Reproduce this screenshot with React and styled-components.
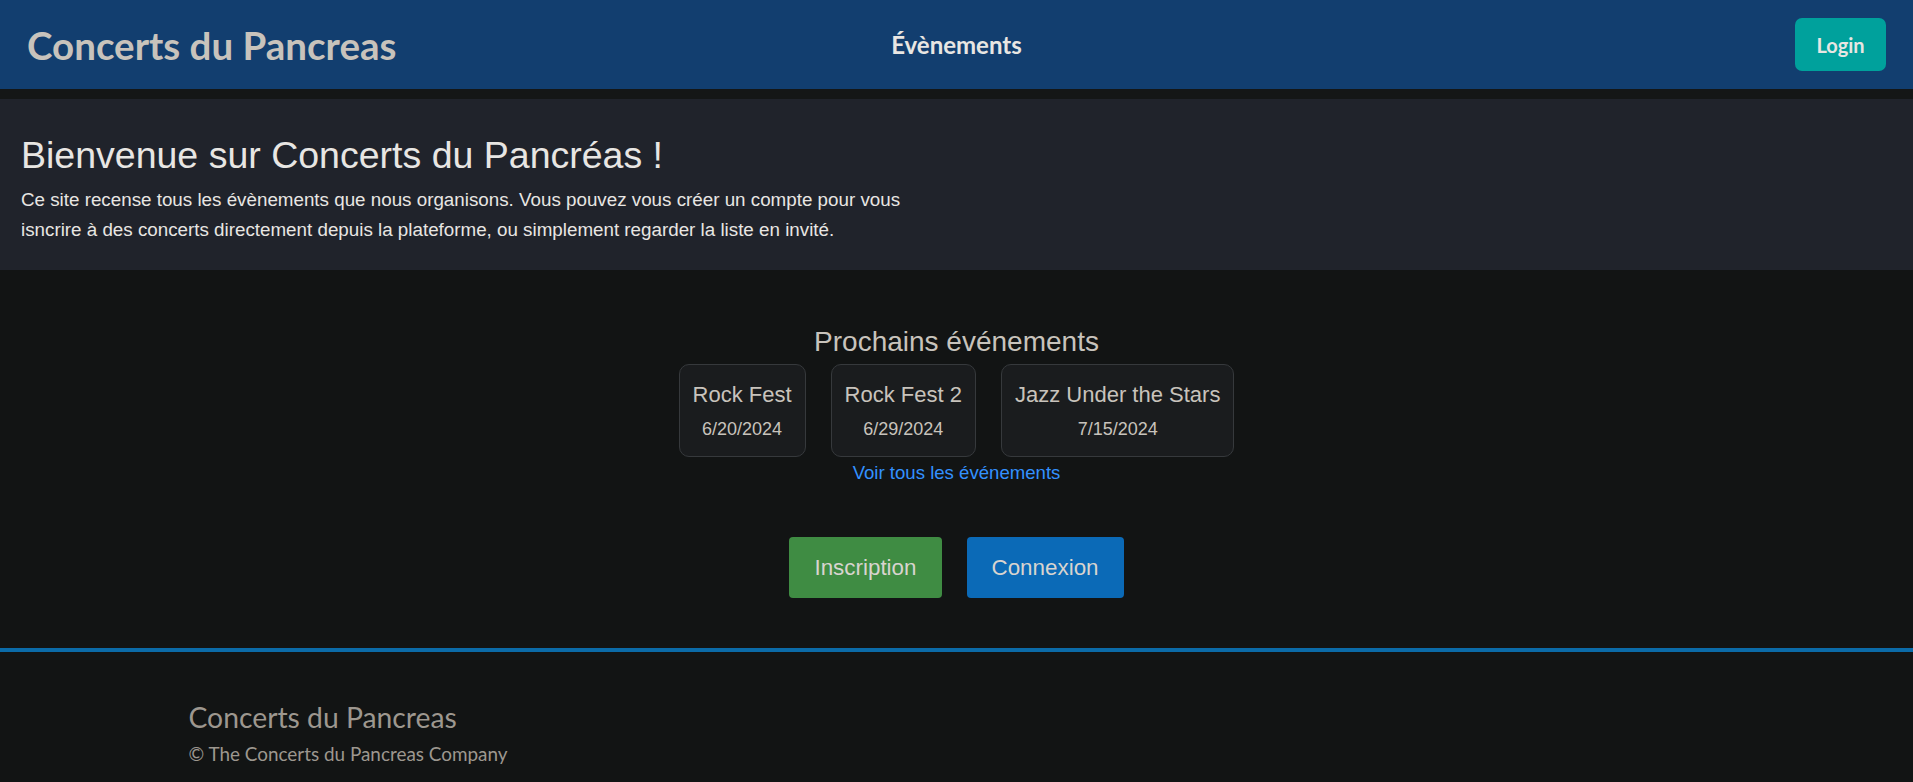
import React from 'react'
import styled, { createGlobalStyle } from 'styled-components'

const events = [
  { id: 1, name: 'Rock Fest', date: '6/20/2024' },
  { id: 2, name: 'Rock Fest 2', date: '6/29/2024' },
  { id: 3, name: 'Jazz Under the Stars', date: '7/15/2024' },
]

const GlobalStyle = createGlobalStyle`
  html {
    overflow-y: scroll;
    background: #121414;
  }
  html::-webkit-scrollbar {
    width: 3px;
  }
  html::-webkit-scrollbar-track {
    background: #3b3e41;
  }
  html::-webkit-scrollbar-thumb {
    background: #3b3e41;
  }
  body {
    margin: 0;
    background: #121414;
    color: #c8c3bc;
    font-family: 'Liberation Sans', Arial, sans-serif;
  }
`

const Page = styled.div`
  display: flex;
  flex-direction: column;
  min-height: 100vh;
`

const Navbar = styled.header`
  display: grid;
  grid-template-columns: 1fr auto 1fr;
  align-items: center;
  height: 89px;
  padding: 0 27px 0 27px;
  background: #123e6f;
  border-bottom: 10px solid #141616;
  font-family: Lato, 'Noto Sans', sans-serif;
`

const Brand = styled.div`
  font-size: 38.5px;
  font-weight: 700;
  color: #c8c3bc;
`

const NavLink = styled.a`
  font-size: 24px;
  font-weight: 700;
  color: #e8e6e3;
  text-decoration: none;
`

const LoginButton = styled.button`
  justify-self: end;
  width: 91px;
  height: 53px;
  border: none;
  border-radius: 7px;
  background: #00a19c;
  color: #e8e6e3;
  font-family: Lato, 'Noto Sans', sans-serif;
  font-size: 20px;
  font-weight: 700;
`

const Hero = styled.section`
  background: #20232b;
  padding: 34px 21px 25px;
`

const HeroTitle = styled.h1`
  margin: 0 0 7px;
  font-size: 37.5px;
  font-weight: 400;
  line-height: 1.2;
  color: #e8e6e3;
`

const HeroText = styled.p`
  margin: 0;
  max-width: 920px;
  font-size: 18.8px;
  line-height: 30px;
  color: #e8e6e3;
`

const Main = styled.main`
  display: flex;
  flex-direction: column;
  align-items: center;
  padding: 56px 0 50px;
`

const SectionTitle = styled.h2`
  margin: 0 0 6px;
  font-size: 28px;
  font-weight: 400;
  line-height: 32px;
  color: #c8c3bc;
`

const CardRow = styled.div`
  display: flex;
  gap: 25px;
`

const Card = styled.div`
  display: flex;
  flex-direction: column;
  align-items: center;
  gap: 10px;
  padding: 17px 13px 16px;
  border: 1px solid #36393c;
  border-radius: 10px;
  background: #1a1c1e;
`

const CardTitle = styled.div`
  font-size: 22px;
  line-height: 26px;
  color: #c8c3bc;
`

const CardDate = styled.div`
  font-size: 18px;
  line-height: 22px;
  color: #c8c3bc;
`

const AllLink = styled.a`
  margin-top: 5px;
  font-size: 18.6px;
  line-height: 22px;
  color: #3391ff;
  text-decoration: none;
`

const Actions = styled.div`
  display: flex;
  gap: 25px;
  margin-top: 53px;
`

const ActionButton = styled.button`
  height: 61px;
  padding: 0 25px;
  border: none;
  border-radius: 4px;
  background: ${(p) => p.$bg};
  color: #d8d4cf;
  font-family: 'Liberation Sans', Arial, sans-serif;
  font-size: 22.4px;
`

const Footer = styled.footer`
  border-top: 4px solid #0b6ba8;
  padding: 48px 0 20px;
  font-family: Lato, 'Noto Sans', sans-serif;
`

const FooterInner = styled.div`
  max-width: 1536px;
  margin: 0 auto;
`

const FooterTitle = styled.div`
  font-size: 28.3px;
  line-height: 34px;
  color: #9d978f;
`

const Copyright = styled.div`
  margin-top: 9px;
  font-size: 18.9px;
  line-height: 22px;
  color: #9d978f;
`

export default function App() {
  return (
    <Page>
      <GlobalStyle />
      <Navbar>
        <Brand>Concerts du Pancreas</Brand>
        <NavLink href="#">Évènements</NavLink>
        <LoginButton>Login</LoginButton>
      </Navbar>
      <Hero>
        <HeroTitle>Bienvenue sur Concerts du Pancréas !</HeroTitle>
        <HeroText>
          Ce site recense tous les évènements que nous organisons. Vous pouvez vous créer un compte pour vous
          isncrire à des concerts directement depuis la plateforme, ou simplement regarder la liste en invité.
        </HeroText>
      </Hero>
      <Main>
        <SectionTitle>Prochains événements</SectionTitle>
        <CardRow>
          {events.map((ev) => (
            <Card key={ev.id}>
              <CardTitle>{ev.name}</CardTitle>
              <CardDate>{ev.date}</CardDate>
            </Card>
          ))}
        </CardRow>
        <AllLink href="#">Voir tous les événements</AllLink>
        <Actions>
          <ActionButton $bg="#3f8c43">Inscription</ActionButton>
          <ActionButton $bg="#0b6ab7">Connexion</ActionButton>
        </Actions>
      </Main>
      <Footer>
        <FooterInner>
          <FooterTitle>Concerts du Pancreas</FooterTitle>
          <Copyright>© The Concerts du Pancreas Company</Copyright>
        </FooterInner>
      </Footer>
    </Page>
  )
}
